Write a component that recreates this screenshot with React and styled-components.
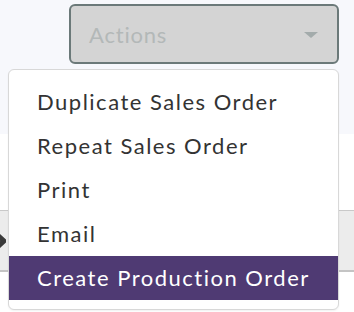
import styled, { createGlobalStyle } from "styled-components";

const GlobalStyle = createGlobalStyle`
  html, body {
    margin: 0;
    padding: 0;
    background: #ffffff;
  }
  body {
    font-family: Lato, "Liberation Sans", sans-serif;
  }
`;

const Page = styled.div`
  width: 354px;
  height: 312px;
  position: relative;
  overflow: hidden;
  background: #ffffff;
`;

const Header = styled.div`
  height: 134px;
  box-sizing: border-box;
  padding: 4px 15px 0 0;
  background: #f7f8fc;
  display: flex;
  justify-content: flex-end;
  align-items: flex-start;
`;

const Body = styled.div`
  padding-top: 76px;
`;

const GreyRow = styled.div`
  height: 59px;
  background: #ececec;
  border-top: 1px solid #c9c9c9;
  border-bottom: 2px solid #c4c4c4;
  display: flex;
  align-items: center;
  margin-left: -7px;
`;

const ActionsWrapper = styled.div`
  position: relative;
`;

const ActionsButton = styled.button`
  width: 270px;
  height: 60px;
  box-sizing: border-box;
  border: 2px solid #6b7979;
  border-radius: 6px;
  background: #d4d4d4;
  padding: 0 19px 0 18px;
  display: flex;
  align-items: center;
  justify-content: space-between;
  font-family: Lato, "Liberation Sans", sans-serif;
  font-size: 22px;
  letter-spacing: 0.8px;
  color: #b3b8b8;
  cursor: default;
`;

const Caret = styled.span`
  width: 0;
  height: 0;
  border-left: 7px solid transparent;
  border-right: 7px solid transparent;
  border-top: 6px solid #a3abab;
  margin-top: 2px;
`;

const Menu = styled.ul`
  position: absolute;
  top: calc(100% + 5px);
  right: 0;
  width: 331px;
  box-sizing: border-box;
  margin: 0;
  padding: 10px 0 9px;
  list-style: none;
  background: #ffffff;
  border: 1px solid #d8d8d8;
  border-radius: 6px;
  box-shadow: 0 1px 2px rgba(0, 0, 0, 0.06);
`;

const MenuItem = styled.li`
  height: 44px;
  line-height: 44px;
  padding-left: 28px;
  font-size: 22px;
  letter-spacing: 1.5px;
  color: ${({ $active }) => ($active ? "#ffffff" : "#333333")};
  background: ${({ $active }) => ($active ? "#4f3a73" : "transparent")};
  white-space: nowrap;
`;

const items = [
  "Duplicate Sales Order",
  "Repeat Sales Order",
  "Print",
  "Email",
  "Create Production Order",
];

const CloseIcon = () => (
  <svg width="13" height="22" viewBox="0 0 13 22">
    <path
      d="M1 2 L11 11 L1 20"
      fill="none"
      stroke="#3a3a3a"
      strokeWidth="5"
      strokeLinecap="round"
    />
  </svg>
);

const App = () => {
  return (
    <>
      <GlobalStyle />
      <Page>
        <Header>
          <ActionsWrapper>
            <ActionsButton>
              Actions
              <Caret />
            </ActionsButton>
            <Menu>
              {items.map((item, i) => (
                <MenuItem key={item} $active={i === items.length - 1}>
                  {item}
                </MenuItem>
              ))}
            </Menu>
          </ActionsWrapper>
        </Header>
        <Body>
          <GreyRow>
            <CloseIcon />
          </GreyRow>
        </Body>
      </Page>
    </>
  );
};

export default App;
